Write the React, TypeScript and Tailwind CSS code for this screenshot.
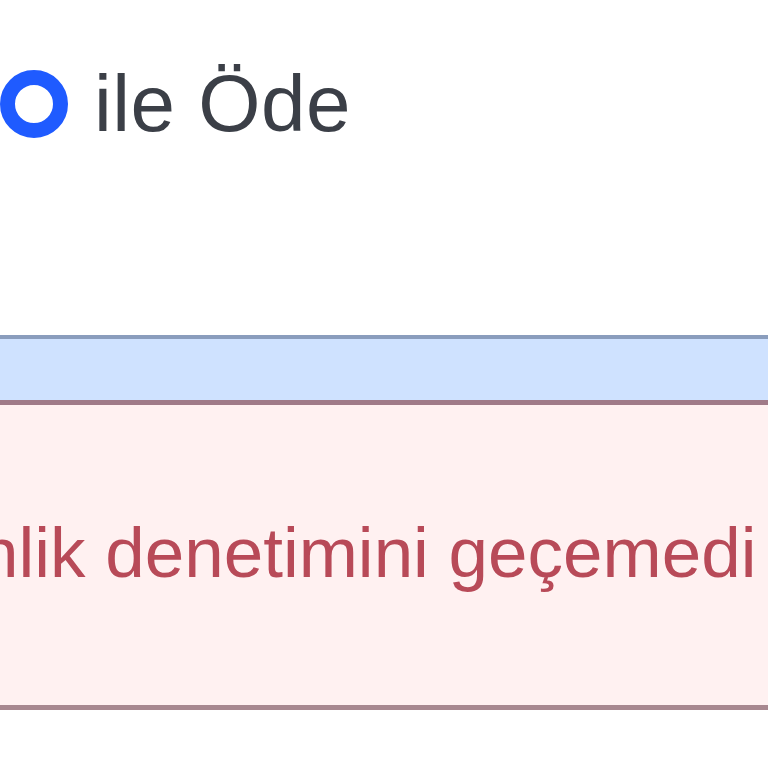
import React from 'react';

const App = () => {
  return (
    <div className="w-[768px] h-[768px] overflow-hidden bg-white font-['Liberation_Sans',Arial,sans-serif]">
      <div className="h-[335px] pt-[64px]">
        <div className="flex items-center gap-[26px] h-[80px]">
          <div className="w-[68px] h-[68px] shrink-0 rounded-full border-[15px] border-[#1f5bff] bg-white" />
          <span className="text-[80px] leading-none tracking-[0.5px] text-[#3b3f47] whitespace-nowrap">ile Öde</span>
        </div>
      </div>

      <div className="h-[65px] border-t-4 border-[#8a9dbd] bg-[#cfe2ff]" />

      <div className="h-[310px] border-t-[5px] border-b-[5px] border-t-[#a07a88] border-b-[#a88890] bg-[#fff1f1] overflow-hidden">
        <div className="pt-[112px] -ml-[21px] whitespace-nowrap text-[71px] leading-none text-[#b84a58]">
          nlik denetimini geçemedi
        </div>
      </div>
    </div>
  );
};

export default App;
